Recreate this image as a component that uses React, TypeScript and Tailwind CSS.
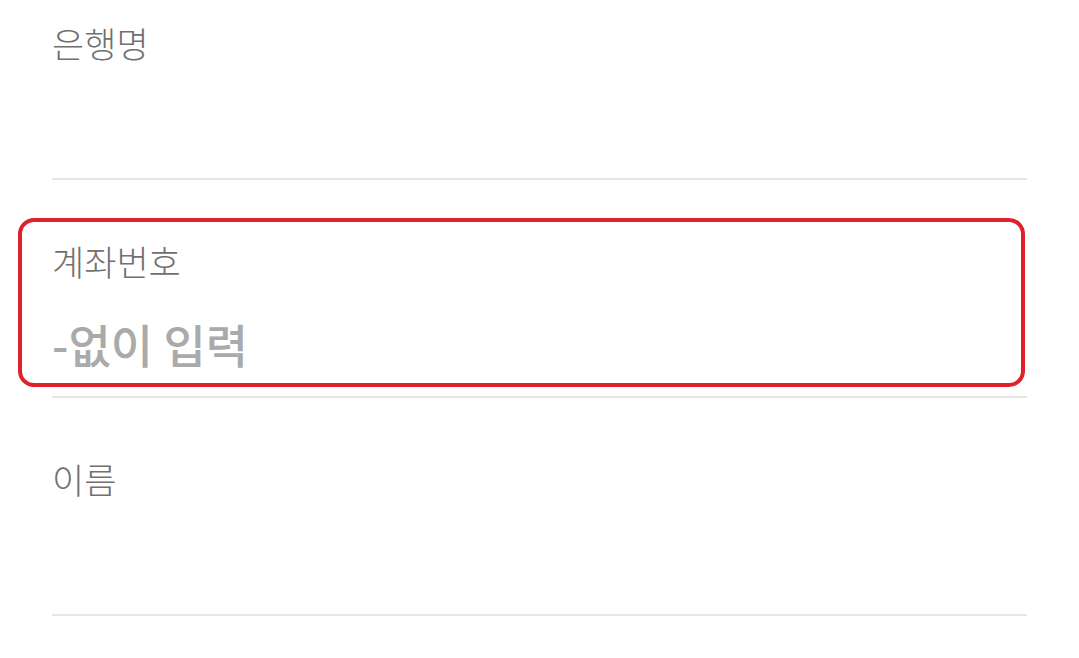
import React from 'react'

const fields = [
  { label: '은행명', placeholder: '', focused: false },
  { label: '계좌번호', placeholder: '-없이 입력', focused: true },
  { label: '이름', placeholder: '', focused: false },
]

export default function App() {
  return (
    <div className="w-[1079px] h-[658px] overflow-hidden bg-white font-['Noto_Sans_CJK_KR','Noto_Sans',sans-serif]">
      <div className="-mt-[38px] px-[52px]">
        {fields.map((f) => (
          <div
            key={f.label}
            className="relative h-[218px] w-[975px] border-b-2 border-[#e6e6e6] pt-[63px]"
          >
            {f.focused && (
              <div className="absolute -left-[34px] top-[38px] h-[169px] w-[1007px] rounded-[16px] border-4 border-[#e0202b] pointer-events-none" />
            )}
            <div className="text-[35px] leading-none font-light text-[#707070]">{f.label}</div>
            <div className="mt-[42px] h-[46px] text-[46px] leading-none font-medium text-[#aaaaaa]">
              {f.placeholder}
            </div>
          </div>
        ))}
      </div>
    </div>
  )
}
